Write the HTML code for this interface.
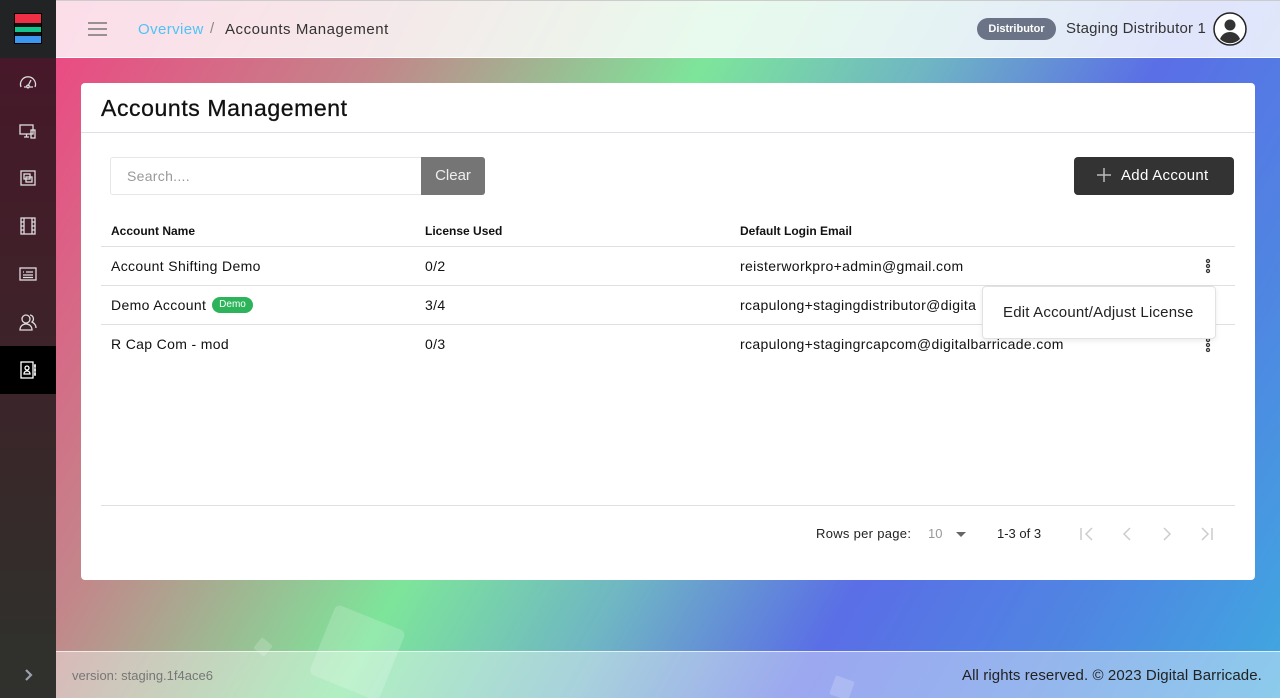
<!DOCTYPE html>
<html><head><meta charset="utf-8"><style>
*{box-sizing:border-box;margin:0;padding:0}
body{width:1280px;height:698px;overflow:hidden;font-family:"Liberation Sans",sans-serif;color:#111;position:relative;background:#fff}
.bg{position:absolute;left:56px;top:0;width:1224px;height:698px;background:linear-gradient(120deg,#ee4582 0%,#c3868a 22%,#7de59a 42%,#6fb5c4 56%,#5a6ee6 70%,#4f86e2 85%,#3fa9e0 100%)}
.hdr{position:absolute;left:56px;top:0;width:1224px;height:58px;background:rgba(255,255,255,.82);border-top:1px solid #ccc;border-bottom:1px solid rgba(255,255,255,.9)}
.ftr{position:absolute;left:56px;top:651px;width:1224px;height:47px;background:rgba(255,255,255,.4);border-top:1px solid rgba(255,255,255,.7)}
.side{position:absolute;left:0;top:0;width:56px;height:698px;background:linear-gradient(180deg,#461829 58px,#3f2129 300px,#30302c 650px)}
.logo{position:absolute;left:0;top:0;width:56px;height:58px;background:#222325}
.ic{position:absolute;left:18px;width:20px;height:20px}
.card{position:absolute;left:81px;top:83px;width:1174px;height:497px;background:#fff;border-radius:4px}
.t{position:absolute;white-space:nowrap}
.r{font-size:14px;letter-spacing:.35px}
.hl{position:absolute;height:1px;background:#e0e0e0}
</style></head><body>
<div class="bg"></div>
<svg style="position:absolute;left:0;top:0" width="1280" height="698"><g fill="rgba(255,255,255,.18)"><rect x="320" y="615" width="75" height="75" rx="6" transform="rotate(22 357 652)"/><rect x="256" y="640" width="14" height="14" rx="2" transform="rotate(40 263 647)"/><rect x="832" y="678" width="20" height="20" rx="2" transform="rotate(20 842 688)"/></g></svg>
<div class="hdr"></div>
<div class="ftr"></div>
<div class="side"></div>
<div class="logo"><div style="position:absolute;left:14px;top:13px;width:28px;height:31px;border:1px solid #000"><div style="height:9px;background:#ef2f45"></div><div style="height:4px;background:#111"></div><div style="height:5px;background:#13c48d"></div><div style="height:4px;background:#111"></div><div style="height:7px;background:#3b97f0"></div></div></div>
<div style="position:absolute;left:0;top:346px;width:56px;height:48px;background:#000"></div>
<svg class="ic" style="top:72px" viewBox="0 0 20 20" fill="none" stroke="#ddd" stroke-width="1.3"><path d="M3 15a7.5 7.5 0 1 1 14 0M10 14l3-6M6 15h2M12 15h3"/><circle cx="10" cy="14.5" r="1.3"/></svg>
<svg class="ic" style="top:121px" viewBox="0 0 20 20" fill="none" stroke="#ddd" stroke-width="1.3"><rect x="2" y="4" width="13" height="9"/><path d="M6 16h5M8.5 13v3"/><rect x="13" y="9" width="4" height="8"/></svg>
<svg class="ic" style="top:168px" viewBox="0 0 20 20" fill="none" stroke="#ddd" stroke-width="1.3"><rect x="3" y="3" width="14" height="14"/><rect x="6" y="6" width="6" height="5"/><rect x="8" y="9" width="6" height="5"/></svg>
<svg class="ic" style="top:216px" viewBox="0 0 20 20" fill="none" stroke="#ddd" stroke-width="1.3"><rect x="3" y="2" width="14" height="16"/><path d="M6 2v16M14 2v16M3 6h3M3 10h3M3 14h3M14 6h3M14 10h3M14 14h3"/></svg>
<svg class="ic" style="top:264px" viewBox="0 0 20 20" fill="none" stroke="#ddd" stroke-width="1.3"><rect x="2" y="4" width="16" height="12"/><path d="M5 8h1M8 8h7M5 11h10M5 13.5h10"/></svg>
<svg class="ic" style="top:312px" viewBox="0 0 20 20" fill="none" stroke="#ddd" stroke-width="1.3"><circle cx="8" cy="7" r="4"/><path d="M2 18c0-4 3-6 6-6s6 2 6 6zM12 3a4 4 0 0 1 2 7c2 1 4 3 4 6"/></svg>
<svg class="ic" style="top:360px" viewBox="0 0 20 20" fill="none" stroke="#fff" stroke-width="1.3"><rect x="3" y="2" width="12" height="16"/><circle cx="9" cy="8" r="2"/><path d="M6 14c0-2 1.5-3 3-3s3 1 3 3zM17 4v12M16 6h2M16 10h2M16 14h2"/></svg>
<svg style="position:absolute;left:24px;top:668px" width="10" height="14" viewBox="0 0 10 14"><path d="M2 2l5 5-5 5" fill="none" stroke="#9aa0ac" stroke-width="2.2"/></svg>
<svg style="position:absolute;left:88px;top:21px" width="19" height="16"><path d="M0 2h19M0 8h19M0 14h19" stroke="#777" stroke-width="1.6"/></svg>
<div class="t" style="left:138px;top:21px;font-size:15px;color:#4fc3f7;letter-spacing:.4px">Overview</div>
<div class="t" style="left:210px;top:20px;font-size:15px;color:#888">/</div>
<div class="t" style="left:225px;top:21px;font-size:15px;color:#333;letter-spacing:.55px">Accounts Management</div>
<div class="t" style="left:977px;top:18px;width:79px;height:22px;border-radius:11px;background:#6b7386;color:#fff;font-size:11px;font-weight:bold;text-align:center;line-height:22px">Distributor</div>
<div class="t" style="left:1066px;top:20px;font-size:15px;color:#333;letter-spacing:.2px">Staging Distributor 1</div>
<svg style="position:absolute;left:1213px;top:12px" width="34" height="34" viewBox="0 0 34 34"><circle cx="17" cy="17" r="16" fill="#fff" stroke="#222" stroke-width="1.5"/><circle cx="17" cy="13" r="5.5" fill="#333"/><path d="M7 27c2-5 6-7 10-7s8 2 10 7a14 14 0 0 1-20 0z" fill="#333"/></svg>
<div class="card"></div>
<div class="t" style="left:101px;top:95px;font-size:23px;color:#111;letter-spacing:.6px;-webkit-text-stroke:.3px #111">Accounts Management</div>
<div class="hl" style="left:81px;top:132px;width:1174px;background:#dde0e6"></div>
<div style="position:absolute;left:110px;top:157px;width:312px;height:38px;border:1px solid #e6e6e6;border-radius:3px 0 0 3px"></div>
<div class="t" style="left:127px;top:168px;font-size:14px;color:#999;letter-spacing:.3px">Search....</div>
<div class="t" style="left:421px;top:157px;width:64px;height:38px;background:#757575;color:#eee;border-radius:0 3px 3px 0;font-size:15px;text-align:center;line-height:38px">Clear</div>
<div class="t" style="left:1074px;top:157px;width:160px;height:38px;background:#333;border-radius:4px;color:#fff;font-size:15px;line-height:38px;padding-left:47px;letter-spacing:.3px">Add Account</div>
<svg style="position:absolute;left:1097px;top:168px" width="14" height="14"><path d="M7 0v14M0 7h14" stroke="#bbb" stroke-width="1.5"/></svg>
<div class="t" style="left:111px;top:224px;font-size:12px;font-weight:bold">Account Name</div>
<div class="t" style="left:425px;top:224px;font-size:12px;font-weight:bold">License Used</div>
<div class="t" style="left:740px;top:224px;font-size:12px;font-weight:bold">Default Login Email</div>
<div class="hl" style="left:101px;top:246px;width:1134px"></div>
<div class="hl" style="left:101px;top:285px;width:1134px"></div>
<div class="hl" style="left:101px;top:324px;width:1134px"></div>
<div class="t r" style="left:111px;top:258px">Account Shifting Demo</div>
<div class="t r" style="left:425px;top:258px">0/2</div>
<div class="t r" style="left:740px;top:258px">reisterworkpro+admin@gmail.com</div>
<div class="t r" style="left:111px;top:297px">Demo Account</div>
<div class="t" style="left:212px;top:297px;width:41px;height:16px;border-radius:8px;background:#2db45a;color:#fff;font-size:10px;text-align:center;line-height:16px">Demo</div>
<div class="t r" style="left:425px;top:297px">3/4</div>
<div class="t r" style="left:740px;top:297px">rcapulong+stagingdistributor@digita</div>
<div class="t r" style="left:111px;top:336px">R Cap Com - mod</div>
<div class="t r" style="left:425px;top:336px">0/3</div>
<div class="t r" style="left:740px;top:336px">rcapulong+stagingrcapcom@digitalbarricade.com</div>
<svg style="position:absolute;left:1205px;top:258px" width="6" height="16"><g fill="none" stroke="#333" stroke-width="1.3"><circle cx="3" cy="3" r="1.5"/><circle cx="3" cy="8" r="1.5"/><circle cx="3" cy="13" r="1.5"/></g></svg>
<svg style="position:absolute;left:1205px;top:337px" width="6" height="16"><g fill="none" stroke="#333" stroke-width="1.3"><circle cx="3" cy="3" r="1.5"/><circle cx="3" cy="8" r="1.5"/><circle cx="3" cy="13" r="1.5"/></g></svg>
<div style="position:absolute;left:982px;top:286px;width:234px;height:53px;background:#fff;border:1px solid #e2e2e2;border-radius:4px;box-shadow:0 2px 6px rgba(0,0,0,.08)"></div>
<div class="t" style="left:1003px;top:304px;font-size:15px;color:#222;letter-spacing:.2px">Edit Account/Adjust License</div>
<div class="hl" style="left:101px;top:505px;width:1134px"></div>
<div class="t" style="left:816px;top:526px;font-size:13px;color:#222;letter-spacing:.3px">Rows per page:</div>
<div class="t" style="left:928px;top:526px;font-size:13px;color:#999">10</div>
<svg style="position:absolute;left:956px;top:532px" width="10" height="5"><path d="M0 0h10L5 5z" fill="#666"/></svg>
<div class="t" style="left:997px;top:526px;font-size:13px;color:#222">1-3 of 3</div>
<svg style="position:absolute;left:1078px;top:526px" width="140" height="16" fill="none" stroke="#ccc" stroke-width="1.5"><path d="M3 2v12M14 2l-6 6 6 6M52 2l-6 6 6 6M86 2l6 6-6 6M124 2l6 6-6 6M134 2v12"/></svg>
<div class="t" style="left:72px;top:668px;font-size:13px;color:#777">version: staging.1f4ace6</div>
<div class="t" style="left:962px;top:667px;font-size:15px;color:#222;letter-spacing:.1px">All rights reserved. © 2023 Digital Barricade.</div>
</body></html>
